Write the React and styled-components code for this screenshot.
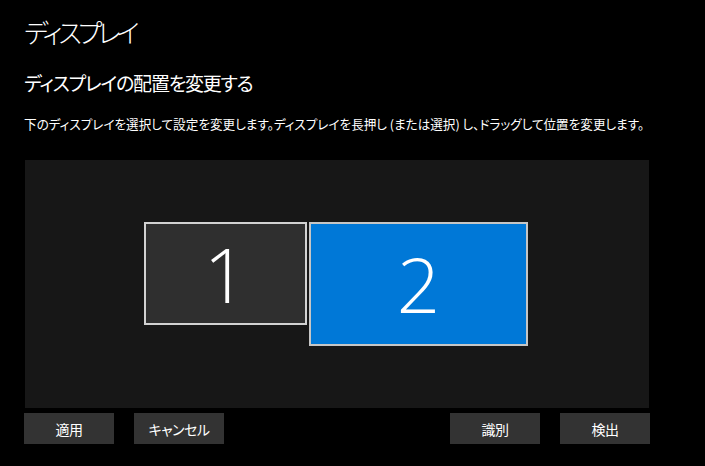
import styled, { createGlobalStyle } from 'styled-components';

const GlobalStyle = createGlobalStyle`
  html, body {
    margin: 0;
    padding: 0;
    background: #000;
  }
  body {
    font-family: "Noto Sans CJK JP", "Noto Sans", sans-serif;
    color: #fff;
    font-feature-settings: "palt";
  }
`

const Page = styled.main`
  width: 705px;
  height: 466px;
  padding: 0 0 0 24px;
  box-sizing: border-box;
  overflow: hidden;
`

const Title = styled.h1`
  margin: 0;
  padding-top: 14px;
  font-size: 26px;
  font-weight: 300;
  line-height: 36px;
  letter-spacing: -4px;
`

const SubTitle = styled.h2`
  margin: 20px 0 0;
  font-size: 19px;
  font-weight: 400;
  line-height: 26px;
  letter-spacing: -1.2px;
`

const Desc = styled.p`
  margin: 18px 0 0;
  font-size: 12.6px;
  line-height: 20px;
  white-space: nowrap;
`

const Canvas = styled.section`
  position: relative;
  margin: 26px 0 0 1px;
  width: 624px;
  height: 248px;
  background: #171717;
`

const Monitor = styled.div`
  position: absolute;
  box-sizing: border-box;
  display: flex;
  align-items: center;
  justify-content: center;
  border: 2px solid ${p => p.$active ? '#c6c6c6' : '#d2d2d2'};
  background: ${p => p.$active ? '#0078d7' : '#2f2f2f'};
  font-family: "Open Sans", "Noto Sans", sans-serif;
  font-weight: 300;
  font-size: 76px;
  line-height: 1;
  color: #fff;
`

const Actions = styled.div`
  display: flex;
  width: 626px;
  margin: 5px 0 0;
  gap: 20px;
`

const Spacer = styled.div`
  flex: 1;
`

const Btn = styled.button`
  width: 90px;
  height: 31px;
  border: none;
  padding: 0;
  background: #333;
  color: #fff;
  font-family: "Noto Sans CJK JP", sans-serif;
  font-feature-settings: "palt";
  font-size: 14px;
  letter-spacing: -0.5px;
`

const monitors = [
  { id: 1, left: 119, top: 62, width: 163, height: 103 },
  { id: 2, left: 284, top: 62, width: 219, height: 124, active: true },
]

export default function App() {
  return (
    <>
      <GlobalStyle />
      <Page>
        <Title>ディスプレイ</Title>
        <SubTitle>ディスプレイの配置を変更する</SubTitle>
        <Desc>下のディスプレイを選択して設定を変更します。ディスプレイを長押し (または選択) し、ドラッグして位置を変更します。</Desc>
        <Canvas>
          {monitors.map(m => (
            <Monitor
              key={m.id}
              $active={m.active}
              style={{ left: m.left, top: m.top, width: m.width, height: m.height }}
            >
              {m.id}
            </Monitor>
          ))}
        </Canvas>
        <Actions>
          <Btn>適用</Btn>
          <Btn>キャンセル</Btn>
          <Spacer />
          <Btn>識別</Btn>
          <Btn>検出</Btn>
        </Actions>
      </Page>
    </>
  )
}
